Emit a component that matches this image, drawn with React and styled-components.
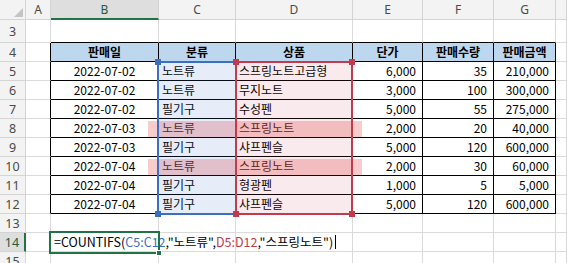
import React from "react";
import styled, { createGlobalStyle } from "styled-components";

const GlobalStyle = createGlobalStyle`
  html, body { margin: 0; padding: 0; background: #ffffff; }
  body { font-family: "Noto Sans CJK KR", "Noto Sans", sans-serif; }
`;

const GRID = "#dadada";
const BLACK = "#000000";
const GREEN = "#217346";
const BLUE = "#3a6fc4";
const RED = "#c23a4b";

const Viewport = styled.div`
  width: 567px;
  height: 263px;
  overflow: hidden;
  background: #ffffff;
`;

/* Sheet rows: grid row 1 = column letters, grid row n = sheet row n + 1 */
const Sheet = styled.div`
  position: relative;
  display: grid;
  grid-template-columns: 26px 25px 108px 77px 117px 70px 71px 62px 1fr;
  grid-template-rows: 20px 23px repeat(12, 19px);
  width: 567px;
`;

const HeaderCell = styled.div`
  box-sizing: border-box;
  display: flex;
  align-items: center;
  justify-content: center;
  background: ${(p) => (p.$sel ? "#dedede" : "#f3f3f3")};
  border-right: 1px solid #d4d4d4;
  border-bottom: ${(p) => (p.$sel ? `2px solid ${GREEN}` : "1px solid #d4d4d4")};
  font-family: "Noto Sans", "Liberation Sans", sans-serif;
  font-size: 12px;
  color: ${(p) => (p.$sel ? "#1f5c3a" : "#4a4a4a")};
  padding-top: ${(p) => (p.$sel ? "1px" : "0")};
`;

const Corner = styled.div`
  box-sizing: border-box;
  background: #f3f3f3;
  border-right: 1px solid #d4d4d4;
  border-bottom: 1px solid #d4d4d4;
  display: flex;
  align-items: flex-end;
  justify-content: flex-end;
  padding: 0 2px 2px 0;
`;

const RowHeader = styled.div`
  box-sizing: border-box;
  display: flex;
  align-items: center;
  justify-content: center;
  background: ${(p) => (p.$sel ? "#dedede" : "#f3f3f3")};
  border-right: ${(p) => (p.$sel ? `2px solid ${GREEN}` : "1px solid #d4d4d4")};
  border-bottom: 1px solid #d4d4d4;
  font-family: "Noto Sans", "Liberation Sans", sans-serif;
  font-size: 12.5px;
  color: ${(p) => (p.$sel ? "#1f5c3a" : "#4a4a4a")};
`;

const Cell = styled.div`
  box-sizing: border-box;
  display: flex;
  align-items: center;
  justify-content: ${(p) =>
    p.$align === "center" ? "center" : p.$align === "right" ? "flex-end" : "flex-start"};
  padding: ${(p) => (p.$align === "right" ? "0 6px 0 0" : p.$align === "left" ? "0 0 0 3px" : "0")};
  background: ${(p) => p.$bg || "transparent"};
  border-right: 1px solid ${(p) => p.$rb};
  border-bottom: 1px solid ${(p) => p.$bb};
  font-size: 12px;
  font-weight: ${(p) => (p.$bold ? 700 : 400)};
  color: #000;
  white-space: nowrap;
  line-height: 1;
  overflow: visible;
  position: ${(p) => (p.$front ? "relative" : "static")};
  z-index: ${(p) => (p.$front ? 3 : "auto")};
`;

const FormulaText = styled.span`
  display: inline-flex;
  align-items: center;
  font-size: 12.5px;
  color: #000;
`;

const Ref = styled.span`
  color: ${(p) => p.$color};
`;

const Caret = styled.span`
  display: inline-block;
  width: 1px;
  height: 14px;
  background: #000;
  margin-left: 2px;
`;

/* Overlays: anchored to a grid area of the sheet, nudged onto the gridlines */
const RangeBox = styled.div`
  position: absolute;
  box-sizing: border-box;
  grid-column: ${(p) => `${p.$col} / ${p.$col + 1}`};
  grid-row: 4 / 12;
  inset: -1px ${(p) => p.$r}px -1px ${(p) => p.$l}px;
  border: 2px solid ${(p) => p.$color};
  background: ${(p) => p.$fill};
  pointer-events: none;
  z-index: ${(p) => p.$z};
`;

const Handle = styled.div`
  position: absolute;
  width: 6px;
  height: 6px;
  background: ${(p) => p.$color};
  ${(p) => (p.$top ? "top: -4px;" : "bottom: -4px;")}
  ${(p) => (p.$left ? "left: -4px;" : "right: -4px;")}
`;

const RowMark = styled.div`
  position: absolute;
  grid-column: 4 / 6;
  grid-row: ${(p) => `${p.$row} / ${p.$row + 1}`};
  inset: 2px -9px 1px -11px;
  background: rgba(236, 96, 96, 0.32);
  z-index: 2;
  pointer-events: none;
`;

const ActiveFrame = styled.div`
  position: absolute;
  box-sizing: border-box;
  grid-column: 3 / 4;
  grid-row: 13 / 14;
  inset: -2px -1px -2px -2px;
  border: 2px solid ${GREEN};
  z-index: 4;
`;

const FillHandle = styled.div`
  position: absolute;
  box-sizing: border-box;
  right: -4px;
  bottom: -4px;
  width: 6px;
  height: 6px;
  background: ${GREEN};
  border: 1px solid #ffffff;
`;

const cols = ["A", "B", "C", "D", "E", "F", "G", ""];

const header = ["판매일", "분류", "상품", "단가", "판매수량", "판매금액"];
const data = [
  ["2022-07-02", "노트류", "스프링노트고급형", "6,000", "35", "210,000"],
  ["2022-07-02", "노트류", "무지노트", "3,000", "100", "300,000"],
  ["2022-07-02", "필기구", "수성펜", "5,000", "55", "275,000"],
  ["2022-07-03", "노트류", "스프링노트", "2,000", "20", "40,000"],
  ["2022-07-03", "필기구", "샤프펜슬", "5,000", "120", "600,000"],
  ["2022-07-04", "노트류", "스프링노트", "2,000", "30", "60,000"],
  ["2022-07-04", "필기구", "형광펜", "1,000", "5", "5,000"],
  ["2022-07-04", "필기구", "샤프펜슬", "5,000", "120", "600,000"],
];

const aligns = ["center", "left", "left", "right", "right", "right"];

function rightColor(r, ci) {
  if (r >= 4 && r <= 12 && ci <= 6) return BLACK;
  return GRID;
}
function bottomColor(r, ci) {
  if (r >= 3 && r <= 12 && ci >= 1 && ci <= 6) return BLACK;
  return GRID;
}

function Formula() {
  return (
    <FormulaText>
      =COUNTIFS(<Ref $color={BLUE}>C5:C12</Ref>,"노트류",<Ref $color={RED}>D5:D12</Ref>,"스프링노트")
      <Caret />
    </FormulaText>
  );
}

function Corners({ color }) {
  return (
    <>
      <Handle $color={color} $top $left />
      <Handle $color={color} $top />
      <Handle $color={color} $left />
      <Handle $color={color} />
    </>
  );
}

export default function App() {
  const rows = [];
  for (let r = 3; r <= 15; r++) {
    rows.push(
      <RowHeader key={`h${r}`} $sel={r === 14}>
        {r}
      </RowHeader>
    );
    for (let ci = 0; ci < 8; ci++) {
      let content = null;
      let align = "left";
      let bold = false;
      let bg;
      if (r === 4 && ci >= 1 && ci <= 6) {
        content = header[ci - 1];
        align = "center";
        bold = true;
        bg = "#bdd7ee";
      } else if (r >= 5 && r <= 12 && ci >= 1 && ci <= 6) {
        content = data[r - 5][ci - 1];
        align = aligns[ci - 1];
      }
      const front = r === 14 && ci === 1;
      if (front) content = <Formula />;
      rows.push(
        <Cell
          key={`c${r}-${ci}`}
          $align={align}
          $bold={bold}
          $bg={bg}
          $rb={rightColor(r, ci)}
          $bb={bottomColor(r, ci)}
          $front={front}
        >
          {content}
        </Cell>
      );
    }
  }

  return (
    <Viewport>
      <GlobalStyle />
      <Sheet>
        <Corner>
          <svg width="9" height="9" viewBox="0 0 9 9">
            <polygon points="9,0 9,9 0,9" fill="#c4c4c4" />
          </svg>
        </Corner>
        {cols.map((c, i) => (
          <HeaderCell key={`col${i}`} $sel={c === "B"}>
            {c}
          </HeaderCell>
        ))}
        {rows}

        <RowMark $row={7} />
        <RowMark $row={9} />

        <RangeBox $col={4} $l={-2} $r={-1} $color={BLUE} $fill="rgba(58,111,196,0.12)" $z={6}>
          <Corners color={BLUE} />
        </RangeBox>
        <RangeBox $col={5} $l={-1} $r={0} $color={RED} $fill="rgba(194,58,75,0.1)" $z={7}>
          <Corners color={RED} />
        </RangeBox>

        <ActiveFrame>
          <FillHandle />
        </ActiveFrame>
      </Sheet>
    </Viewport>
  );
}
